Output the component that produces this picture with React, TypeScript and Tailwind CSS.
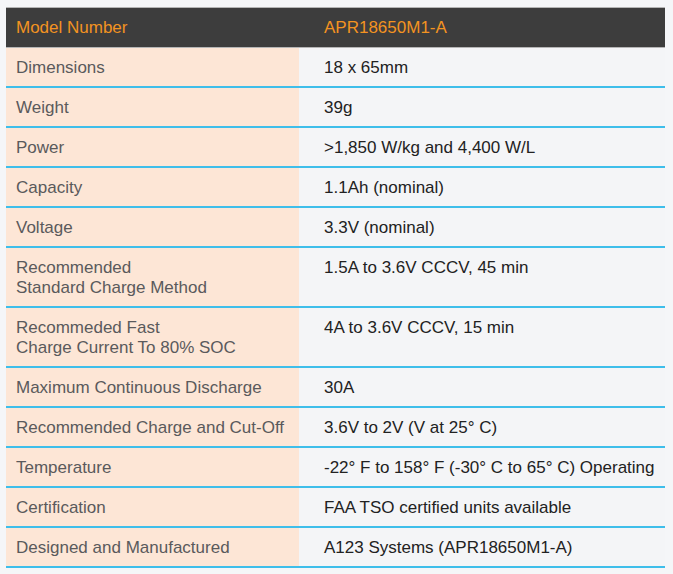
import React from "react";

const rows: [string[], string][] = [
  [["Dimensions"], "18 x 65mm"],
  [["Weight"], "39g"],
  [["Power"], ">1,850 W/kg and 4,400 W/L"],
  [["Capacity"], "1.1Ah (nominal)"],
  [["Voltage"], "3.3V (nominal)"],
  [["Recommended", "Standard Charge Method"], "1.5A to 3.6V CCCV, 45 min"],
  [["Recommeded Fast", "Charge Current To 80% SOC"], "4A to 3.6V CCCV, 15 min"],
  [["Maximum Continuous Discharge"], "30A"],
  [["Recommended Charge and Cut-Off"], "3.6V to 2V (V at 25\u00b0 C)"],
  [["Temperature"], "-22\u00b0 F to 158\u00b0 F (-30\u00b0 C to 65\u00b0 C) Operating"],
  [["Certification"], "FAA TSO certified units available"],
  [["Designed and Manufactured"], "A123 Systems (APR18650M1-A)"],
];

export default function App() {
  return (
    <div
      className="w-[673px] h-[574px] bg-[#f5f6f8] pt-[7px] pl-[6px]"
      style={{ fontFamily: '"Liberation Sans", Arial, sans-serif' }}
    >
      <div className="w-[659px] text-[17px] leading-[20px]">
        <div className="flex h-[41px] bg-[#3d3d3d] border-t border-b border-[#b5b5b5] text-[#f39321]">
          <div className="w-[293px] pl-[10px] pt-[10px]">Model Number</div>
          <div className="flex-1 pl-[25px] pt-[10px]">APR18650M1-A</div>
        </div>
        {rows.map(([label, value], i) => (
          <div key={i} className="flex border-b-2 border-[#3ebeea]">
            <div className="w-[293px] bg-[#fde6d6] pl-[10px] pt-[10px] pb-[8px] text-[#5a5a5c]">
              {label.map((l, j) => (
                <div key={j}>{l}</div>
              ))}
            </div>
            <div className="flex-1 bg-[#f4f5f7] pl-[25px] pt-[10px] pb-[8px] text-[#222222]">
              {value}
            </div>
          </div>
        ))}
      </div>
    </div>
  );
}
